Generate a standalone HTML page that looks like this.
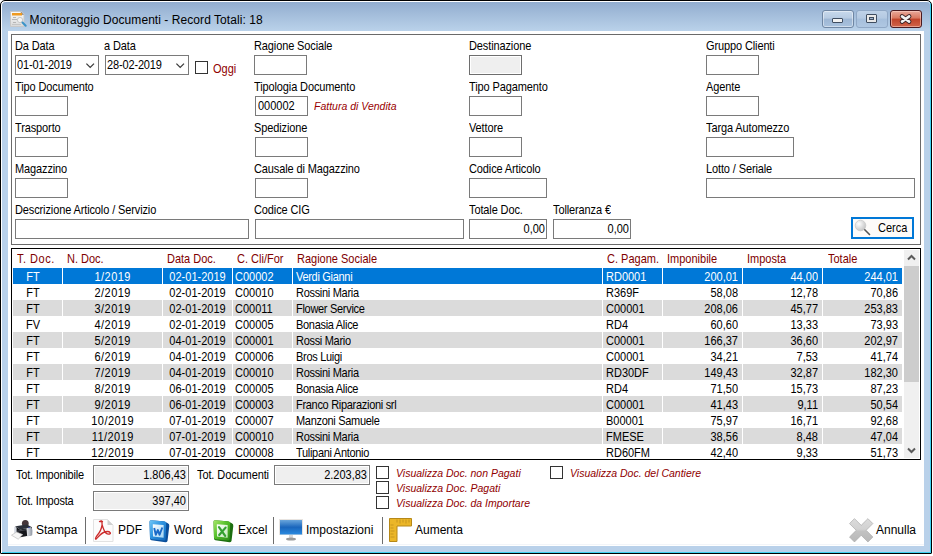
<!DOCTYPE html><html><head><meta charset="utf-8"><style>
*{margin:0;padding:0;box-sizing:content-box}
html,body{width:933px;height:556px;overflow:hidden;background:#fff}
body{position:relative;font-family:"Liberation Sans",sans-serif}
.t{position:absolute;white-space:nowrap;line-height:20px;font-family:"Liberation Sans",sans-serif}
.S{transform:scaleY(1.1);transform-origin:0 14px}
.b{position:absolute}
svg{position:absolute;overflow:visible}
</style></head><body><div class="b" style="left:0;top:0;width:930px;height:552px;border:1px solid #000;border-radius:5px 5px 1px 1px;background:#b9d1ea;box-shadow:inset 1px 1px 0 #fff,inset -1px -1px 0 #3fd2f2"></div>
<div class="b" style="left:2px;top:2px;width:928px;height:29px;border-radius:4px 4px 0 0;background:linear-gradient(#92adcf,#bad2ea)"></div>
<div class="b" style="left:8px;top:31px;width:916px;height:515px;background:#fff;"></div>
<div class="b" style="left:8px;top:544px;width:916px;height:1px;background:#f2f5f9;"></div>
<svg style="left:9px;top:10px" width="18" height="18" viewBox="0 0 18 18">
<defs><linearGradient id="pg" x1="0" y1="0" x2="0" y2="1"><stop offset="0" stop-color="#fafafa"/><stop offset="1" stop-color="#d9d9d9"/></linearGradient></defs>
<path d="M1.5 1.5h11l2.5 2.5v12.5h-13.5z" fill="url(#pg)" stroke="#c8c8c8" stroke-width="1"/>
<path d="M11.8 1.5l3.2 3.2h-3.2z" fill="#7a7a7a"/>
<rect x="3" y="3" width="10" height="2.5" fill="#ee9a22"/>
<rect x="4" y="7" width="3" height="1" fill="#b5b5b5"/>
<rect x="3" y="9" width="5" height="1" fill="#b5b5b5"/>
<rect x="4" y="12" width="3" height="1" fill="#b5b5b5"/>
<rect x="3" y="14" width="9" height="1" fill="#c5c5c5"/>
<circle cx="11" cy="10" r="2.6" fill="#f4f4f4" stroke="#bdbdbd" stroke-width="0.8"/>
<path d="M13.5 12.5l3.2 3.2" stroke="#3a93c8" stroke-width="2" stroke-linecap="round"/>
</svg>
<div class="t " style="left:29.6px;top:10px;font-size:12px;color:#000;letter-spacing:0.06px;">Monitoraggio Documenti - Record Totali: 18</div>
<div class="b" style="left:822px;top:10px;width:30px;height:16px;border:1px solid #6f86a3;border-radius:3px;background:linear-gradient(#c8d9ec 0%,#b7cbe2 45%,#9db6d4 50%,#a9c2de 100%);box-shadow:inset 0 0 0 1px rgba(255,255,255,.45)"></div>
<div class="b" style="left:832px;top:18px;width:9px;height:3px;background:#f2f2f2;border:1px solid #3f4d60;border-radius:1px"></div>
<div class="b" style="left:856px;top:10px;width:30px;height:16px;border:1px solid #90a8c6;border-radius:3px;background:linear-gradient(#bfd2e8 0%,#b4c9e2 45%,#a6bfdc 50%,#afc7e2 100%)"></div>
<div class="b" style="left:866px;top:14px;width:9px;height:7px;border:1px solid #3f4d60;background:#e8e8e8;border-radius:1px"></div>
<div class="b" style="left:869px;top:17px;width:3px;height:1px;border:1px solid #3f4d60;background:#9fb3cc"></div>
<div class="b" style="left:890px;top:10px;width:30px;height:16px;border:1px solid #4a1a20;border-radius:3px;background:linear-gradient(#e9a99b 0%,#d9775f 45%,#c0432a 50%,#d0644a 100%);box-shadow:inset 0 0 0 1px rgba(255,220,210,.5)"></div>
<svg style="left:898px;top:12px" width="16" height="14" viewBox="0 0 16 14">
<path d="M4 4.4l7.2 5.2M11.2 4.4l-7.2 5.2" stroke="#3b2326" stroke-width="4.4" stroke-linecap="round"/>
<path d="M4 4.4l7.2 5.2M11.2 4.4l-7.2 5.2" stroke="#f2f2f2" stroke-width="2.6" stroke-linecap="round"/>
</svg>
<div class="b" style="left:11px;top:34px;width:908px;height:209px;border:1px solid #6a6a6a"></div>
<div class="t LB S" style="left:15px;top:36px;font-size:11px;color:#000;letter-spacing:-0.12px;">Da Data</div>
<div class="t LB S" style="left:104px;top:36px;font-size:11px;color:#000;letter-spacing:-0.12px;">a Data</div>
<div class="t LB S" style="left:254px;top:36px;font-size:11px;color:#000;letter-spacing:-0.12px;">Ragione Sociale</div>
<div class="t LB S" style="left:469px;top:36px;font-size:11px;color:#000;letter-spacing:-0.12px;">Destinazione</div>
<div class="t LB S" style="left:706px;top:36px;font-size:11px;color:#000;letter-spacing:-0.12px;">Gruppo Clienti</div>
<div class="b" style="left:15px;top:55px;width:82px;height:18px;background:#fff;border:1px solid #7a7a7a;"></div>
<div class="b" style="left:105px;top:55px;width:82px;height:18px;background:#fff;border:1px solid #7a7a7a;"></div>
<div class="t  S" style="left:17px;top:55px;font-size:11px;color:#000;letter-spacing:-0.15px;">01-01-2019</div>
<div class="t  S" style="left:107px;top:55px;font-size:11px;color:#000;letter-spacing:-0.15px;">28-02-2019</div>
<svg style="left:86px;top:63px" width="9" height="6" viewBox="0 0 9 6"><path d="M0.4 0.6l3.8 3.8 3.8-3.8" fill="none" stroke="#3a3a3a" stroke-width="1.25"/></svg>
<svg style="left:176px;top:63px" width="9" height="6" viewBox="0 0 9 6"><path d="M0.4 0.6l3.8 3.8 3.8-3.8" fill="none" stroke="#3a3a3a" stroke-width="1.25"/></svg>
<div class="b" style="left:195px;top:61px;width:11px;height:11px;background:#fff;border:1px solid #333;"></div>
<div class="t  S" style="left:213px;top:59px;font-size:11px;color:#900000;">Oggi</div>
<div class="b" style="left:254px;top:55px;width:51px;height:18px;background:#fff;border:1px solid #7a7a7a;"></div>
<div class="b" style="left:469px;top:55px;width:51px;height:18px;background:#efefef;border:1px solid #6e6e6e;box-shadow:inset 0 0 0 1px #fff;"></div>
<div class="b" style="left:706px;top:55px;width:51px;height:18px;background:#fff;border:1px solid #7a7a7a;"></div>
<div class="t LB S" style="left:15px;top:77px;font-size:11px;color:#000;letter-spacing:-0.12px;">Tipo Documento</div>
<div class="t LB S" style="left:254px;top:77px;font-size:11px;color:#000;letter-spacing:-0.12px;">Tipologia Documento</div>
<div class="t LB S" style="left:469px;top:77px;font-size:11px;color:#000;letter-spacing:-0.12px;">Tipo Pagamento</div>
<div class="t LB S" style="left:706px;top:77px;font-size:11px;color:#000;letter-spacing:-0.12px;">Agente</div>
<div class="b" style="left:15px;top:96px;width:51px;height:18px;background:#fff;border:1px solid #7a7a7a;"></div>
<div class="b" style="left:255px;top:96px;width:51px;height:18px;background:#fff;border:1px solid #7a7a7a;"></div>
<div class="t  S" style="left:258px;top:96px;font-size:11px;color:#000;">000002</div>
<div class="t S" style="left:314px;top:96px;font-size:10.5px;color:#990000;font-style:italic;">Fattura di Vendita</div>
<div class="b" style="left:469px;top:96px;width:51px;height:18px;background:#fff;border:1px solid #7a7a7a;"></div>
<div class="b" style="left:706px;top:96px;width:51px;height:18px;background:#fff;border:1px solid #7a7a7a;"></div>
<div class="t LB S" style="left:15px;top:118px;font-size:11px;color:#000;letter-spacing:-0.12px;">Trasporto</div>
<div class="t LB S" style="left:254px;top:118px;font-size:11px;color:#000;letter-spacing:-0.12px;">Spedizione</div>
<div class="t LB S" style="left:469px;top:118px;font-size:11px;color:#000;letter-spacing:-0.12px;">Vettore</div>
<div class="t LB S" style="left:706px;top:118px;font-size:11px;color:#000;letter-spacing:-0.12px;">Targa Automezzo</div>
<div class="b" style="left:15px;top:137px;width:51px;height:18px;background:#fff;border:1px solid #7a7a7a;"></div>
<div class="b" style="left:255px;top:137px;width:51px;height:18px;background:#fff;border:1px solid #7a7a7a;"></div>
<div class="b" style="left:469px;top:137px;width:51px;height:18px;background:#fff;border:1px solid #7a7a7a;"></div>
<div class="b" style="left:706px;top:137px;width:86px;height:18px;background:#fff;border:1px solid #7a7a7a;"></div>
<div class="t LB S" style="left:15px;top:159px;font-size:11px;color:#000;letter-spacing:-0.12px;">Magazzino</div>
<div class="t LB S" style="left:254px;top:159px;font-size:11px;color:#000;letter-spacing:-0.12px;">Causale di Magazzino</div>
<div class="t LB S" style="left:469px;top:159px;font-size:11px;color:#000;letter-spacing:-0.12px;">Codice Articolo</div>
<div class="t LB S" style="left:706px;top:159px;font-size:11px;color:#000;letter-spacing:-0.12px;">Lotto / Seriale</div>
<div class="b" style="left:15px;top:178px;width:51px;height:18px;background:#fff;border:1px solid #7a7a7a;"></div>
<div class="b" style="left:255px;top:178px;width:51px;height:18px;background:#fff;border:1px solid #7a7a7a;"></div>
<div class="b" style="left:469px;top:178px;width:76px;height:18px;background:#fff;border:1px solid #7a7a7a;"></div>
<div class="b" style="left:706px;top:178px;width:207px;height:18px;background:#fff;border:1px solid #7a7a7a;"></div>
<div class="t LB S" style="left:15px;top:200px;font-size:11px;color:#000;letter-spacing:-0.12px;">Descrizione Articolo / Servizio</div>
<div class="t LB S" style="left:254px;top:200px;font-size:11px;color:#000;letter-spacing:-0.12px;">Codice CIG</div>
<div class="t LB S" style="left:469px;top:200px;font-size:11px;color:#000;letter-spacing:-0.12px;">Totale Doc.</div>
<div class="t LB S" style="left:553px;top:200px;font-size:11px;color:#000;letter-spacing:-0.12px;">Tolleranza €</div>
<div class="b" style="left:15px;top:219px;width:232px;height:18px;background:#fff;border:1px solid #7a7a7a;"></div>
<div class="b" style="left:255px;top:219px;width:207px;height:18px;background:#fff;border:1px solid #7a7a7a;"></div>
<div class="b" style="left:469px;top:219px;width:76px;height:18px;background:#fff;border:1px solid #7a7a7a;"></div>
<div class="b" style="left:553px;top:219px;width:76px;height:18px;background:#fff;border:1px solid #7a7a7a;"></div>
<div class="t S" style="right:388px;top:219px;font-size:11px;color:#000;text-align:right;">0,00</div>
<div class="t S" style="right:304px;top:219px;font-size:11px;color:#000;text-align:right;">0,00</div>
<div class="b" style="left:851px;top:217px;width:59px;height:18px;border:2px solid #0078d7;background:#fdfbf9"></div>
<svg style="left:854px;top:219px" width="18" height="18" viewBox="0 0 18 18">
<defs><radialGradient id="mg" cx="0.35" cy="0.35" r="0.7"><stop offset="0" stop-color="#fff"/><stop offset="1" stop-color="#c4c4c4"/></radialGradient></defs>
<path d="M9.5 9.5l6 6" stroke="#555" stroke-width="1.6" stroke-linecap="round"/>
<circle cx="6.5" cy="6.5" r="5.3" fill="url(#mg)" stroke="#c9c9c9" stroke-width="0.8"/>
</svg>
<div class="t  S" style="left:878px;top:218px;font-size:11px;color:#000;">Cerca</div>
<div class="b" style="left:11px;top:248px;width:908px;height:210px;border:1px solid #000;background:#fff"></div>
<div class="t  S" style="left:17px;top:249px;font-size:11px;color:#800000;letter-spacing:0.5px;">T. Doc.</div>
<div class="t  S" style="left:67px;top:249px;font-size:11px;color:#800000;">N. Doc.</div>
<div class="t  S" style="left:167px;top:249px;font-size:11px;color:#800000;">Data Doc.</div>
<div class="t  S" style="left:237px;top:249px;font-size:11px;color:#800000;">C. Cli/For</div>
<div class="t  S" style="left:297px;top:249px;font-size:11px;color:#800000;">Ragione Sociale</div>
<div class="t  S" style="left:607px;top:249px;font-size:11px;color:#800000;">C. Pagam.</div>
<div class="t  S" style="left:667px;top:249px;font-size:11px;color:#800000;">Imponibile</div>
<div class="t  S" style="left:747px;top:249px;font-size:11px;color:#800000;">Imposta</div>
<div class="t  S" style="left:828px;top:249px;font-size:11px;color:#800000;">Totale</div>
<div class="b" style="left:12px;top:268px;width:891px;height:191px;overflow:hidden">
<div class="b" style="left:1px;top:0px;width:49px;height:16px;background:#0078d7"></div>
<div class="b" style="left:51px;top:0px;width:99px;height:16px;background:#0078d7"></div>
<div class="b" style="left:151px;top:0px;width:69px;height:16px;background:#0078d7"></div>
<div class="b" style="left:221px;top:0px;width:59px;height:16px;background:#0078d7"></div>
<div class="b" style="left:281px;top:0px;width:309px;height:16px;background:#0078d7"></div>
<div class="b" style="left:591px;top:0px;width:59px;height:16px;background:#0078d7"></div>
<div class="b" style="left:651px;top:0px;width:79px;height:16px;background:#0078d7"></div>
<div class="b" style="left:731px;top:0px;width:79px;height:16px;background:#0078d7"></div>
<div class="b" style="left:811px;top:0px;width:79px;height:16px;background:#0078d7"></div>
<div class="t S" style="left:1px;width:40px;top:-1px;font-size:11px;color:#fff;text-align:center">FT</div>
<div class="t S" style="left:51px;width:99px;top:-1px;font-size:11px;color:#fff;text-align:center;letter-spacing:0.45px;text-indent:0.45px">1/2019</div>
<div class="t S" style="left:151px;width:69px;top:-1px;font-size:11px;color:#fff;text-align:center">02-01-2019</div>
<div class="t S" style="left:223px;top:-1px;font-size:11px;color:#fff">C00002</div>
<div class="t S" style="left:284px;top:-1px;font-size:11px;color:#fff;letter-spacing:-0.3px">Verdi Gianni</div>
<div class="t S" style="left:594px;top:-1px;font-size:11px;color:#fff">RD0001</div>
<div class="t S" style="left:651px;width:75px;top:-1px;font-size:11px;color:#fff;text-align:right">200,01</div>
<div class="t S" style="left:731px;width:75px;top:-1px;font-size:11px;color:#fff;text-align:right">44,00</div>
<div class="t S" style="left:811px;width:75px;top:-1px;font-size:11px;color:#fff;text-align:right">244,01</div>
<div class="t S" style="left:1px;width:40px;top:15px;font-size:11px;color:#000;text-align:center">FT</div>
<div class="t S" style="left:51px;width:99px;top:15px;font-size:11px;color:#000;text-align:center;letter-spacing:0.45px;text-indent:0.45px">2/2019</div>
<div class="t S" style="left:151px;width:69px;top:15px;font-size:11px;color:#000;text-align:center">02-01-2019</div>
<div class="t S" style="left:223px;top:15px;font-size:11px;color:#000">C00010</div>
<div class="t S" style="left:284px;top:15px;font-size:11px;color:#000;letter-spacing:-0.3px">Rossini Maria</div>
<div class="t S" style="left:594px;top:15px;font-size:11px;color:#000">R369F</div>
<div class="t S" style="left:651px;width:75px;top:15px;font-size:11px;color:#000;text-align:right">58,08</div>
<div class="t S" style="left:731px;width:75px;top:15px;font-size:11px;color:#000;text-align:right">12,78</div>
<div class="t S" style="left:811px;width:75px;top:15px;font-size:11px;color:#000;text-align:right">70,86</div>
<div class="b" style="left:1px;top:32px;width:49px;height:16px;background:#dbdbdb"></div>
<div class="b" style="left:51px;top:32px;width:99px;height:16px;background:#dbdbdb"></div>
<div class="b" style="left:151px;top:32px;width:69px;height:16px;background:#dbdbdb"></div>
<div class="b" style="left:221px;top:32px;width:59px;height:16px;background:#dbdbdb"></div>
<div class="b" style="left:281px;top:32px;width:309px;height:16px;background:#dbdbdb"></div>
<div class="b" style="left:591px;top:32px;width:59px;height:16px;background:#dbdbdb"></div>
<div class="b" style="left:651px;top:32px;width:79px;height:16px;background:#dbdbdb"></div>
<div class="b" style="left:731px;top:32px;width:79px;height:16px;background:#dbdbdb"></div>
<div class="b" style="left:811px;top:32px;width:79px;height:16px;background:#dbdbdb"></div>
<div class="t S" style="left:1px;width:40px;top:31px;font-size:11px;color:#000;text-align:center">FT</div>
<div class="t S" style="left:51px;width:99px;top:31px;font-size:11px;color:#000;text-align:center;letter-spacing:0.45px;text-indent:0.45px">3/2019</div>
<div class="t S" style="left:151px;width:69px;top:31px;font-size:11px;color:#000;text-align:center">02-01-2019</div>
<div class="t S" style="left:223px;top:31px;font-size:11px;color:#000">C00011</div>
<div class="t S" style="left:284px;top:31px;font-size:11px;color:#000;letter-spacing:-0.3px">Flower Service</div>
<div class="t S" style="left:594px;top:31px;font-size:11px;color:#000">C00001</div>
<div class="t S" style="left:651px;width:75px;top:31px;font-size:11px;color:#000;text-align:right">208,06</div>
<div class="t S" style="left:731px;width:75px;top:31px;font-size:11px;color:#000;text-align:right">45,77</div>
<div class="t S" style="left:811px;width:75px;top:31px;font-size:11px;color:#000;text-align:right">253,83</div>
<div class="t S" style="left:1px;width:40px;top:47px;font-size:11px;color:#000;text-align:center">FV</div>
<div class="t S" style="left:51px;width:99px;top:47px;font-size:11px;color:#000;text-align:center;letter-spacing:0.45px;text-indent:0.45px">4/2019</div>
<div class="t S" style="left:151px;width:69px;top:47px;font-size:11px;color:#000;text-align:center">02-01-2019</div>
<div class="t S" style="left:223px;top:47px;font-size:11px;color:#000">C00005</div>
<div class="t S" style="left:284px;top:47px;font-size:11px;color:#000;letter-spacing:-0.3px">Bonasia Alice</div>
<div class="t S" style="left:594px;top:47px;font-size:11px;color:#000">RD4</div>
<div class="t S" style="left:651px;width:75px;top:47px;font-size:11px;color:#000;text-align:right">60,60</div>
<div class="t S" style="left:731px;width:75px;top:47px;font-size:11px;color:#000;text-align:right">13,33</div>
<div class="t S" style="left:811px;width:75px;top:47px;font-size:11px;color:#000;text-align:right">73,93</div>
<div class="b" style="left:1px;top:64px;width:49px;height:16px;background:#dbdbdb"></div>
<div class="b" style="left:51px;top:64px;width:99px;height:16px;background:#dbdbdb"></div>
<div class="b" style="left:151px;top:64px;width:69px;height:16px;background:#dbdbdb"></div>
<div class="b" style="left:221px;top:64px;width:59px;height:16px;background:#dbdbdb"></div>
<div class="b" style="left:281px;top:64px;width:309px;height:16px;background:#dbdbdb"></div>
<div class="b" style="left:591px;top:64px;width:59px;height:16px;background:#dbdbdb"></div>
<div class="b" style="left:651px;top:64px;width:79px;height:16px;background:#dbdbdb"></div>
<div class="b" style="left:731px;top:64px;width:79px;height:16px;background:#dbdbdb"></div>
<div class="b" style="left:811px;top:64px;width:79px;height:16px;background:#dbdbdb"></div>
<div class="t S" style="left:1px;width:40px;top:63px;font-size:11px;color:#000;text-align:center">FT</div>
<div class="t S" style="left:51px;width:99px;top:63px;font-size:11px;color:#000;text-align:center;letter-spacing:0.45px;text-indent:0.45px">5/2019</div>
<div class="t S" style="left:151px;width:69px;top:63px;font-size:11px;color:#000;text-align:center">04-01-2019</div>
<div class="t S" style="left:223px;top:63px;font-size:11px;color:#000">C00001</div>
<div class="t S" style="left:284px;top:63px;font-size:11px;color:#000;letter-spacing:-0.3px">Rossi Mario</div>
<div class="t S" style="left:594px;top:63px;font-size:11px;color:#000">C00001</div>
<div class="t S" style="left:651px;width:75px;top:63px;font-size:11px;color:#000;text-align:right">166,37</div>
<div class="t S" style="left:731px;width:75px;top:63px;font-size:11px;color:#000;text-align:right">36,60</div>
<div class="t S" style="left:811px;width:75px;top:63px;font-size:11px;color:#000;text-align:right">202,97</div>
<div class="t S" style="left:1px;width:40px;top:79px;font-size:11px;color:#000;text-align:center">FT</div>
<div class="t S" style="left:51px;width:99px;top:79px;font-size:11px;color:#000;text-align:center;letter-spacing:0.45px;text-indent:0.45px">6/2019</div>
<div class="t S" style="left:151px;width:69px;top:79px;font-size:11px;color:#000;text-align:center">04-01-2019</div>
<div class="t S" style="left:223px;top:79px;font-size:11px;color:#000">C00006</div>
<div class="t S" style="left:284px;top:79px;font-size:11px;color:#000;letter-spacing:-0.3px">Bros Luigi</div>
<div class="t S" style="left:594px;top:79px;font-size:11px;color:#000">C00001</div>
<div class="t S" style="left:651px;width:75px;top:79px;font-size:11px;color:#000;text-align:right">34,21</div>
<div class="t S" style="left:731px;width:75px;top:79px;font-size:11px;color:#000;text-align:right">7,53</div>
<div class="t S" style="left:811px;width:75px;top:79px;font-size:11px;color:#000;text-align:right">41,74</div>
<div class="b" style="left:1px;top:96px;width:49px;height:16px;background:#dbdbdb"></div>
<div class="b" style="left:51px;top:96px;width:99px;height:16px;background:#dbdbdb"></div>
<div class="b" style="left:151px;top:96px;width:69px;height:16px;background:#dbdbdb"></div>
<div class="b" style="left:221px;top:96px;width:59px;height:16px;background:#dbdbdb"></div>
<div class="b" style="left:281px;top:96px;width:309px;height:16px;background:#dbdbdb"></div>
<div class="b" style="left:591px;top:96px;width:59px;height:16px;background:#dbdbdb"></div>
<div class="b" style="left:651px;top:96px;width:79px;height:16px;background:#dbdbdb"></div>
<div class="b" style="left:731px;top:96px;width:79px;height:16px;background:#dbdbdb"></div>
<div class="b" style="left:811px;top:96px;width:79px;height:16px;background:#dbdbdb"></div>
<div class="t S" style="left:1px;width:40px;top:95px;font-size:11px;color:#000;text-align:center">FT</div>
<div class="t S" style="left:51px;width:99px;top:95px;font-size:11px;color:#000;text-align:center;letter-spacing:0.45px;text-indent:0.45px">7/2019</div>
<div class="t S" style="left:151px;width:69px;top:95px;font-size:11px;color:#000;text-align:center">04-01-2019</div>
<div class="t S" style="left:223px;top:95px;font-size:11px;color:#000">C00010</div>
<div class="t S" style="left:284px;top:95px;font-size:11px;color:#000;letter-spacing:-0.3px">Rossini Maria</div>
<div class="t S" style="left:594px;top:95px;font-size:11px;color:#000">RD30DF</div>
<div class="t S" style="left:651px;width:75px;top:95px;font-size:11px;color:#000;text-align:right">149,43</div>
<div class="t S" style="left:731px;width:75px;top:95px;font-size:11px;color:#000;text-align:right">32,87</div>
<div class="t S" style="left:811px;width:75px;top:95px;font-size:11px;color:#000;text-align:right">182,30</div>
<div class="t S" style="left:1px;width:40px;top:111px;font-size:11px;color:#000;text-align:center">FT</div>
<div class="t S" style="left:51px;width:99px;top:111px;font-size:11px;color:#000;text-align:center;letter-spacing:0.45px;text-indent:0.45px">8/2019</div>
<div class="t S" style="left:151px;width:69px;top:111px;font-size:11px;color:#000;text-align:center">06-01-2019</div>
<div class="t S" style="left:223px;top:111px;font-size:11px;color:#000">C00005</div>
<div class="t S" style="left:284px;top:111px;font-size:11px;color:#000;letter-spacing:-0.3px">Bonasia Alice</div>
<div class="t S" style="left:594px;top:111px;font-size:11px;color:#000">RD4</div>
<div class="t S" style="left:651px;width:75px;top:111px;font-size:11px;color:#000;text-align:right">71,50</div>
<div class="t S" style="left:731px;width:75px;top:111px;font-size:11px;color:#000;text-align:right">15,73</div>
<div class="t S" style="left:811px;width:75px;top:111px;font-size:11px;color:#000;text-align:right">87,23</div>
<div class="b" style="left:1px;top:128px;width:49px;height:16px;background:#dbdbdb"></div>
<div class="b" style="left:51px;top:128px;width:99px;height:16px;background:#dbdbdb"></div>
<div class="b" style="left:151px;top:128px;width:69px;height:16px;background:#dbdbdb"></div>
<div class="b" style="left:221px;top:128px;width:59px;height:16px;background:#dbdbdb"></div>
<div class="b" style="left:281px;top:128px;width:309px;height:16px;background:#dbdbdb"></div>
<div class="b" style="left:591px;top:128px;width:59px;height:16px;background:#dbdbdb"></div>
<div class="b" style="left:651px;top:128px;width:79px;height:16px;background:#dbdbdb"></div>
<div class="b" style="left:731px;top:128px;width:79px;height:16px;background:#dbdbdb"></div>
<div class="b" style="left:811px;top:128px;width:79px;height:16px;background:#dbdbdb"></div>
<div class="t S" style="left:1px;width:40px;top:127px;font-size:11px;color:#000;text-align:center">FT</div>
<div class="t S" style="left:51px;width:99px;top:127px;font-size:11px;color:#000;text-align:center;letter-spacing:0.45px;text-indent:0.45px">9/2019</div>
<div class="t S" style="left:151px;width:69px;top:127px;font-size:11px;color:#000;text-align:center">06-01-2019</div>
<div class="t S" style="left:223px;top:127px;font-size:11px;color:#000">C00003</div>
<div class="t S" style="left:284px;top:127px;font-size:11px;color:#000;letter-spacing:-0.3px">Franco Riparazioni srl</div>
<div class="t S" style="left:594px;top:127px;font-size:11px;color:#000">C00001</div>
<div class="t S" style="left:651px;width:75px;top:127px;font-size:11px;color:#000;text-align:right">41,43</div>
<div class="t S" style="left:731px;width:75px;top:127px;font-size:11px;color:#000;text-align:right">9,11</div>
<div class="t S" style="left:811px;width:75px;top:127px;font-size:11px;color:#000;text-align:right">50,54</div>
<div class="t S" style="left:1px;width:40px;top:143px;font-size:11px;color:#000;text-align:center">FT</div>
<div class="t S" style="left:51px;width:99px;top:143px;font-size:11px;color:#000;text-align:center;letter-spacing:0.45px;text-indent:0.45px">10/2019</div>
<div class="t S" style="left:151px;width:69px;top:143px;font-size:11px;color:#000;text-align:center">07-01-2019</div>
<div class="t S" style="left:223px;top:143px;font-size:11px;color:#000">C00007</div>
<div class="t S" style="left:284px;top:143px;font-size:11px;color:#000;letter-spacing:-0.3px">Manzoni Samuele</div>
<div class="t S" style="left:594px;top:143px;font-size:11px;color:#000">B00001</div>
<div class="t S" style="left:651px;width:75px;top:143px;font-size:11px;color:#000;text-align:right">75,97</div>
<div class="t S" style="left:731px;width:75px;top:143px;font-size:11px;color:#000;text-align:right">16,71</div>
<div class="t S" style="left:811px;width:75px;top:143px;font-size:11px;color:#000;text-align:right">92,68</div>
<div class="b" style="left:1px;top:160px;width:49px;height:16px;background:#dbdbdb"></div>
<div class="b" style="left:51px;top:160px;width:99px;height:16px;background:#dbdbdb"></div>
<div class="b" style="left:151px;top:160px;width:69px;height:16px;background:#dbdbdb"></div>
<div class="b" style="left:221px;top:160px;width:59px;height:16px;background:#dbdbdb"></div>
<div class="b" style="left:281px;top:160px;width:309px;height:16px;background:#dbdbdb"></div>
<div class="b" style="left:591px;top:160px;width:59px;height:16px;background:#dbdbdb"></div>
<div class="b" style="left:651px;top:160px;width:79px;height:16px;background:#dbdbdb"></div>
<div class="b" style="left:731px;top:160px;width:79px;height:16px;background:#dbdbdb"></div>
<div class="b" style="left:811px;top:160px;width:79px;height:16px;background:#dbdbdb"></div>
<div class="t S" style="left:1px;width:40px;top:159px;font-size:11px;color:#000;text-align:center">FT</div>
<div class="t S" style="left:51px;width:99px;top:159px;font-size:11px;color:#000;text-align:center;letter-spacing:0.45px;text-indent:0.45px">11/2019</div>
<div class="t S" style="left:151px;width:69px;top:159px;font-size:11px;color:#000;text-align:center">07-01-2019</div>
<div class="t S" style="left:223px;top:159px;font-size:11px;color:#000">C00010</div>
<div class="t S" style="left:284px;top:159px;font-size:11px;color:#000;letter-spacing:-0.3px">Rossini Maria</div>
<div class="t S" style="left:594px;top:159px;font-size:11px;color:#000">FMESE</div>
<div class="t S" style="left:651px;width:75px;top:159px;font-size:11px;color:#000;text-align:right">38,56</div>
<div class="t S" style="left:731px;width:75px;top:159px;font-size:11px;color:#000;text-align:right">8,48</div>
<div class="t S" style="left:811px;width:75px;top:159px;font-size:11px;color:#000;text-align:right">47,04</div>
<div class="t S" style="left:1px;width:40px;top:175px;font-size:11px;color:#000;text-align:center">FT</div>
<div class="t S" style="left:51px;width:99px;top:175px;font-size:11px;color:#000;text-align:center;letter-spacing:0.45px;text-indent:0.45px">12/2019</div>
<div class="t S" style="left:151px;width:69px;top:175px;font-size:11px;color:#000;text-align:center">07-01-2019</div>
<div class="t S" style="left:223px;top:175px;font-size:11px;color:#000">C00008</div>
<div class="t S" style="left:284px;top:175px;font-size:11px;color:#000;letter-spacing:-0.3px">Tulipani Antonio</div>
<div class="t S" style="left:594px;top:175px;font-size:11px;color:#000">RD60FM</div>
<div class="t S" style="left:651px;width:75px;top:175px;font-size:11px;color:#000;text-align:right">42,40</div>
<div class="t S" style="left:731px;width:75px;top:175px;font-size:11px;color:#000;text-align:right">9,33</div>
<div class="t S" style="left:811px;width:75px;top:175px;font-size:11px;color:#000;text-align:right">51,73</div>
</div>
<div class="b" style="left:904px;top:250px;width:15px;height:208px;background:#f0f0f0;"></div>
<div class="b" style="left:904px;top:266px;width:15px;height:116px;background:#cdcdcd;"></div>
<svg style="left:907px;top:254px" width="9" height="7" viewBox="0 0 9 7"><path d="M1 5.5l3.5-3.5 3.5 3.5" fill="none" stroke="#5a5a5a" stroke-width="2"/></svg>
<svg style="left:907px;top:447px" width="9" height="7" viewBox="0 0 9 7"><path d="M1 1.5l3.5 3.5 3.5-3.5" fill="none" stroke="#5a5a5a" stroke-width="2"/></svg>
<div class="t  S" style="left:16px;top:465px;font-size:11px;color:#000;letter-spacing:-0.2px;">Tot. Imponibile</div>
<div class="t  S" style="left:16px;top:491px;font-size:11px;color:#000;letter-spacing:-0.2px;">Tot. Imposta</div>
<div class="t  S" style="left:197px;top:465px;font-size:11px;color:#000;letter-spacing:-0.1px;">Tot. Documenti</div>
<div class="b" style="left:93px;top:465px;width:94px;height:18px;background:#efefef;border:1px solid #7a7a7a;box-shadow:inset 0 0 0 1px #fff;"></div>
<div class="b" style="left:93px;top:491px;width:94px;height:18px;background:#efefef;border:1px solid #7a7a7a;box-shadow:inset 0 0 0 1px #fff;"></div>
<div class="b" style="left:274px;top:465px;width:94px;height:18px;background:#efefef;border:1px solid #7a7a7a;box-shadow:inset 0 0 0 1px #fff;"></div>
<div class="t S" style="right:747px;top:465px;font-size:11px;color:#000;text-align:right;">1.806,43</div>
<div class="t S" style="right:747px;top:491px;font-size:11px;color:#000;text-align:right;">397,40</div>
<div class="t S" style="right:566px;top:465px;font-size:11px;color:#000;text-align:right;">2.203,83</div>
<div class="b" style="left:376px;top:466px;width:11px;height:11px;background:#fff;border:1px solid #333;"></div>
<div class="b" style="left:376px;top:481px;width:11px;height:11px;background:#fff;border:1px solid #333;"></div>
<div class="b" style="left:376px;top:496px;width:11px;height:11px;background:#fff;border:1px solid #333;"></div>
<div class="b" style="left:550px;top:466px;width:11px;height:11px;background:#fff;border:1px solid #333;"></div>
<div class="t " style="left:396px;top:463px;font-size:10.5px;color:#900000;font-style:italic;">Visualizza Doc. non Pagati</div>
<div class="t " style="left:396px;top:478px;font-size:10.5px;color:#900000;font-style:italic;">Visualizza Doc. Pagati</div>
<div class="t " style="left:396px;top:493px;font-size:10.5px;color:#900000;font-style:italic;">Visualizza Doc. da Importare</div>
<div class="t " style="left:570px;top:463px;font-size:10.5px;color:#900000;font-style:italic;">Visualizza Doc. del Cantiere</div>

<svg style="left:8px;top:515px" width="28" height="30" viewBox="0 0 28 30">
<defs>
<linearGradient id="prs" x1="0" y1="0" x2="1" y2="0"><stop offset="0" stop-color="#e8eaee"/><stop offset="1" stop-color="#8e96a2"/></linearGradient>
</defs>
<ellipse cx="17.3" cy="8.6" rx="3.4" ry="3.6" fill="#45363a"/>
<path d="M7.5 11.2L19 9.6 24 12.3 12 14.6z" fill="#2c303a"/>
<path d="M7.5 11.2L12 14.6 24 12.3 24 20 12.5 22.2 7.5 19z" fill="#15171c"/>
<path d="M9 16.2l10-1.6" stroke="#5a5e68" stroke-width="0.7"/>
<path d="M18.5 13.2L22.5 12.3Q24.6 13 24.4 16.5L24.2 20.3 19.2 21.6z" fill="url(#prs)"/>
<path d="M6.2 11.8L8.6 12.4 8.6 19.6 6.2 18.3z" fill="#d4d8e0"/>
<circle cx="21" cy="12.6" r="0.7" fill="#2030c0"/>
<path d="M3.5 20.2L8.6 17 14.8 19.6 10.2 24.2z" fill="#f6f6f6" stroke="#b5b5b5" stroke-width="0.6" stroke-linejoin="round"/>
</svg>
<svg style="left:90px;top:515px" width="28" height="30" viewBox="0 0 28 30">
<path d="M3.5 4.5h14l5.5 5.5v16.5h-19.5z" fill="#fcfcfc" stroke="#e2e2e2" stroke-width="1"/>
<path d="M17.5 4.5v5.5h5.5z" fill="#d0d0d0"/>
<path d="M12.5 6.5c-1.5 1 0 5 1.5 8.5s3.5 4.5 5.5 4 0.5-2.5-2-2.5-6 2-8 4-3.5 4-4 3.5 1.5-3.5 3.5-6 3.5-8 3-10.5-0.8-1.6-2.5-1z" fill="none" stroke="#cc2b2b" stroke-width="1.3" stroke-linejoin="round"/>
</svg>
<svg style="left:145px;top:515px" width="28" height="30" viewBox="0 0 28 30">
<defs>
<linearGradient id="wb" x1="0" y1="0" x2="1" y2="1"><stop offset="0" stop-color="#72c8f6"/><stop offset="0.45" stop-color="#2d93e0"/><stop offset="1" stop-color="#1066b8"/></linearGradient>
<linearGradient id="wp" x1="0" y1="0" x2="1" y2="1"><stop offset="0" stop-color="#ffffff"/><stop offset="1" stop-color="#9fd3f2"/></linearGradient>
</defs>
<path d="M6 5.3Q4.5 5.2 4.5 6.8L5 23.5Q5.2 25 6.5 25.3L20.5 27.3Q22 27.3 22.5 26L24.3 11Q24.5 8.7 22.8 8.2L19.5 6.5Q19 6.2 18 6.2z" fill="#0a4e9a"/>
<path d="M6 5.3Q4.5 5.2 4.5 6.8L5 22.5Q5.2 24 6.5 24.2L19 25.5Q20.5 25.6 20.7 24L21.2 8Q21.2 6.5 19.8 6.4z" fill="url(#wb)"/>
<path d="M7.8 9.2l10.8 0.9v12.6l-10.6-1.3z" fill="url(#wp)"/>
<path d="M9.2 13l1.6 6.8 2.1-4.8 1.6 4.8 2.8-7.3" fill="none" stroke="#1a6ac8" stroke-width="1.9" stroke-linejoin="round"/>
</svg>
<svg style="left:209px;top:515px" width="28" height="30" viewBox="0 0 28 30">
<defs>
<linearGradient id="xb" x1="0" y1="0" x2="1" y2="1"><stop offset="0" stop-color="#a8e86a"/><stop offset="0.45" stop-color="#56c02a"/><stop offset="1" stop-color="#2a8a16"/></linearGradient>
<linearGradient id="xp" x1="0" y1="0" x2="1" y2="1"><stop offset="0" stop-color="#ffffff"/><stop offset="1" stop-color="#c4eab8"/></linearGradient>
</defs>
<path d="M6 5.3Q4.5 5.2 4.5 6.8L5 23.5Q5.2 25 6.5 25.3L20.5 27.3Q22 27.3 22.5 26L24.3 11Q24.5 8.7 22.8 8.2L19.5 6.5Q19 6.2 18 6.2z" fill="#1c6e10"/>
<path d="M6 5.3Q4.5 5.2 4.5 6.8L5 22.5Q5.2 24 6.5 24.2L19 25.5Q20.5 25.6 20.7 24L21.2 8Q21.2 6.5 19.8 6.4z" fill="url(#xb)"/>
<path d="M7.8 9.2l10.8 0.9v12.6l-10.6-1.3z" fill="url(#xp)"/>
<path d="M10 12.2l6.2 8.6M16.6 12.6l-6.4 7.4" stroke="#34a030" stroke-width="2.2" stroke-linecap="round"/>
</svg>
<svg style="left:276px;top:515px" width="30" height="30" viewBox="0 0 30 30">
<defs>
<linearGradient id="ms" x1="0" y1="0" x2="0" y2="1"><stop offset="0" stop-color="#6aa6dc"/><stop offset="0.5" stop-color="#1a66bc"/><stop offset="1" stop-color="#2a8ae0"/></linearGradient>
</defs>
<rect x="3" y="4" width="24" height="16" fill="#e8e4e0"/>
<rect x="4" y="5" width="22" height="14.5" fill="url(#ms)"/>
<rect x="13" y="20" width="4" height="3" fill="#d8d8d8"/>
<ellipse cx="15" cy="24" rx="5" ry="1.6" fill="#9a9a9a"/>
</svg>
<svg style="left:386px;top:515px" width="30" height="30" viewBox="0 0 30 30">
<path d="M3.5 3.5h22v7.5h-14.5v15.5h-7.5z" fill="#ebb628" stroke="#b68818" stroke-width="1"/>
<path d="M11 4.5v3M14 4.5v4M17 4.5v3M20 4.5v4M23 4.5v3M4.5 13h3M4.5 16h4M4.5 19h3M4.5 22h4M4.5 10h3" stroke="#b08418" stroke-width="0.6"/>
</svg>
<svg style="left:845px;top:515px" width="30" height="30" viewBox="0 0 30 30">
<defs><linearGradient id="xg" x1="0" y1="0" x2="0" y2="1"><stop offset="0" stop-color="#dcdcdc"/><stop offset="0.45" stop-color="#d2d2d2"/><stop offset="0.55" stop-color="#c2c2c2"/><stop offset="1" stop-color="#b8b8b8"/></linearGradient></defs>
<path d="M16.20 10.35 22.93 3.63 27.87 8.57 21.15 15.30 27.87 22.03 22.93 26.97 16.20 20.25 9.47 26.97 4.53 22.03 11.25 15.30 4.53 8.57 9.47 3.63z" fill="url(#xg)" stroke="#aaaaaa" stroke-width="0.7" stroke-linejoin="round"/>
</svg>

<div class="b" style="left:85px;top:517px;width:1px;height:27px;background:#6d6d6d;"></div>
<div class="b" style="left:273px;top:517px;width:1px;height:27px;background:#6d6d6d;"></div>
<div class="b" style="left:382px;top:517px;width:1px;height:27px;background:#6d6d6d;"></div>
<div class="t " style="left:36px;top:520px;font-size:12px;color:#000;">Stampa</div>
<div class="t " style="left:118px;top:520px;font-size:12px;color:#000;">PDF</div>
<div class="t " style="left:174px;top:520px;font-size:12px;color:#000;">Word</div>
<div class="t " style="left:238px;top:520px;font-size:12px;color:#000;">Excel</div>
<div class="t " style="left:306px;top:520px;font-size:12px;color:#000;">Impostazioni</div>
<div class="t " style="left:415px;top:520px;font-size:12px;color:#000;">Aumenta</div>
<div class="t " style="left:876px;top:520px;font-size:12px;color:#000;">Annulla</div></body></html>
